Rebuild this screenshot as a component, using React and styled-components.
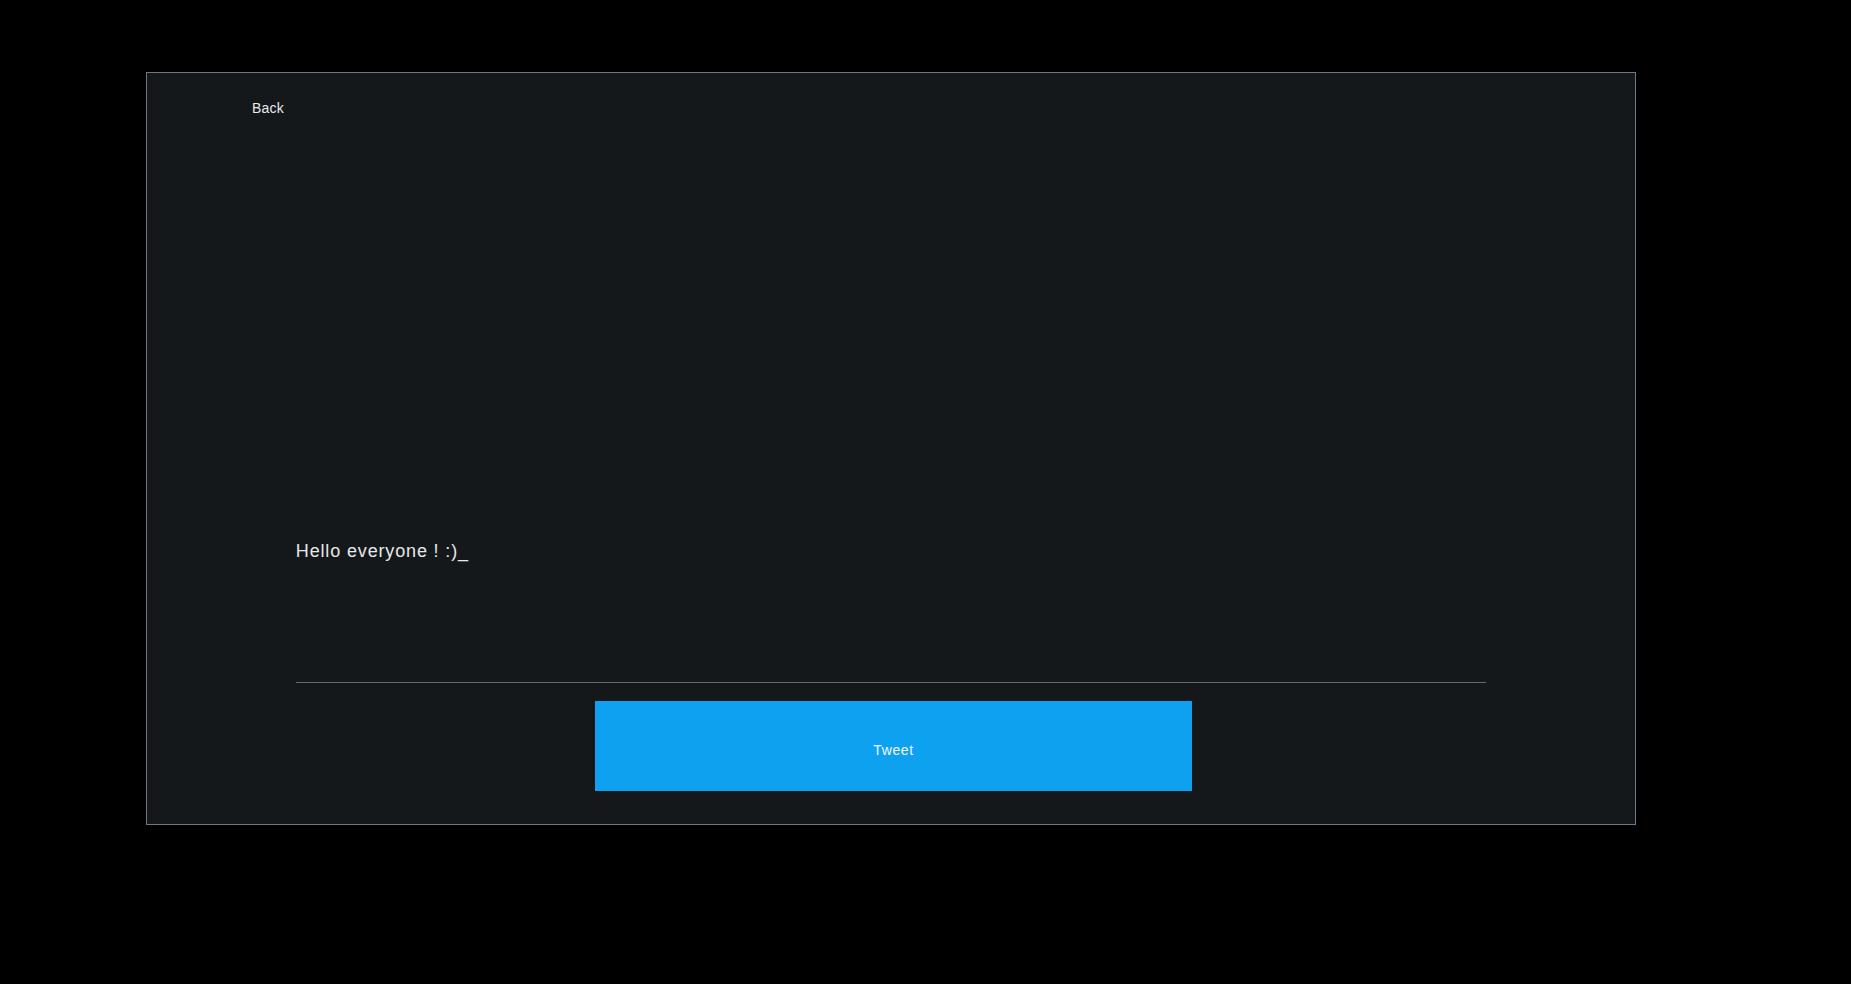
import styled, { createGlobalStyle } from "styled-components";

const GlobalStyle = createGlobalStyle`
  html, body {
    margin: 0;
    background: #000000;
    font-family: "Liberation Sans", Arial, sans-serif;
  }
`;

const Page = styled.div`
  padding: 72px 0 0 146px;
  min-height: 984px;
  box-sizing: border-box;
`;

const Panel = styled.div`
  width: 1490px;
  height: 753px;
  box-sizing: border-box;
  border: 1px solid #6b7884;
  background: #15181b;
  display: flex;
  flex-direction: column;
  padding: 27px 0 33px 0;
`;

const TopBar = styled.div`
  display: flex;
  padding-left: 105px;
`;

const BackLink = styled.button`
  background: none;
  border: none;
  padding: 0;
  font-family: inherit;
  font-size: 14px;
  line-height: 16px;
  letter-spacing: 0.25px;
  color: #e7e9ea;
  cursor: pointer;
`;

const TweetForm = styled.form`
  margin-top: auto;
  display: flex;
  flex-direction: column;
  align-items: center;
`;

const TweetInput = styled.textarea`
  width: 80%;
  height: 143px;
  box-sizing: border-box;
  padding: 0;
  border: none;
  border-bottom: 1px solid #5c6b77;
  background: transparent;
  color: #e7e9ea;
  font-family: "Liberation Sans", Arial, sans-serif;
  font-size: 18px;
  line-height: 23px;
  letter-spacing: 0.85px;
  resize: none;
  outline: none;
`;

const TweetButton = styled.button`
  width: 597px;
  height: 90px;
  margin: 18px 0 0 5px;
  padding: 8px 0 0 0;
  border: none;
  background: #0ea1f0;
  color: #f2f8fd;
  font-family: inherit;
  font-size: 14px;
  letter-spacing: 0.6px;
  cursor: pointer;
`;

const App = () => {
  return (
    <Page>
      <GlobalStyle />
      <Panel>
        <TopBar>
          <BackLink type="button">Back</BackLink>
        </TopBar>
        <TweetForm onSubmit={(e) => e.preventDefault()}>
          <TweetInput defaultValue="Hello everyone ! :)_" />
          <TweetButton type="submit">Tweet</TweetButton>
        </TweetForm>
      </Panel>
    </Page>
  );
};

export default App;
